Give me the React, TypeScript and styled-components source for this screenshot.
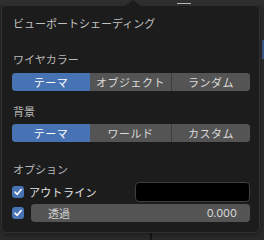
import React, { useState } from "react";
import styled, { createGlobalStyle } from "styled-components";

const GlobalStyle = createGlobalStyle`
  html, body {
    margin: 0;
    padding: 0;
    background: #2a2a2a;
    font-family: Inter, "Noto Sans CJK JP", "Noto Sans", sans-serif;
  }
  * { box-sizing: border-box; }
`;

const Backdrop = styled.div`
  position: relative;
  width: 264px;
  height: 240px;
  overflow: hidden;
  background: #2b2b2b;
`;

const HeaderStrip = styled.div`
  height: 5px;
  background: #303030;
  display: flex;
`;

const HeaderTab = styled.div`
  margin-left: 177px;
  margin-top: 3px;
  width: 14px;
  height: 1px;
  background: #bfbfbf;
`;

const SideSliver = styled.div`
  position: absolute;
  right: 0;
  top: 40px;
  width: 2px;
  height: 19px;
  background: #3a5a8c;
`;

const Divider = styled.div`
  position: absolute;
  left: 150px;
  bottom: 0;
  width: 2px;
  height: 8px;
  background: #151515;
`;

const Popup = styled.div`
  position: absolute;
  left: 1px;
  top: 5px;
  width: 259px;
  height: 228px;
  background: #1c1c1c;
  border: 1px solid #2f2f2f;
  border-radius: 5px;
  padding: 12px 9px 10px 10px;
  display: flex;
  flex-direction: column;
  box-shadow: 0 2px 6px rgba(0, 0, 0, 0.35);
`;

const Pointer = styled.div`
  position: absolute;
  top: -6px;
  left: 123px;
  width: 0;
  height: 0;
  border-left: 8px solid transparent;
  border-right: 8px solid transparent;
  border-bottom: 6px solid #1c1c1c;
`;

const Title = styled.div`
  height: 12px;
  line-height: 12px;
  font-size: 11px;
  color: #c2c2c2;
  padding-left: 1px;
  white-space: nowrap;
`;

const Label = styled.div<{ $top: number }>`
  margin-top: ${(p) => p.$top}px;
  height: 12px;
  line-height: 12px;
  font-size: 11px;
  color: #b8b8b8;
  padding-left: 1px;
  white-space: nowrap;
`;

const Segmented = styled.div<{ $top: number }>`
  margin-top: ${(p) => p.$top}px;
  display: grid;
  grid-template-columns: 78px 81px 1fr;
  height: 18px;
  border-radius: 4px;
  overflow: hidden;
  background: #545454;
`;

const Segment = styled.button<{ $active: boolean; $sep: boolean }>`
  all: unset;
  display: flex;
  align-items: center;
  justify-content: center;
  font-family: Inter, "Noto Sans CJK JP", sans-serif;
  font-size: 11px;
  letter-spacing: 0.5px;
  color: ${(p) => (p.$active ? "#ffffff" : "#dcdcdc")};
  background: ${(p) => (p.$active ? "#4772b3" : "#545454")};
  border-left: ${(p) => (p.$sep ? "1px solid #3d3d3d" : "none")};
  cursor: pointer;
`;

const Row = styled.div<{ $top: number; $h: number }>`
  margin-top: ${(p) => p.$top}px;
  height: ${(p) => p.$h}px;
  display: flex;
  align-items: center;
`;

const CheckLabel = styled.label<{ $w: number }>`
  width: ${(p) => p.$w}px;
  display: flex;
  align-items: center;
  gap: 5px;
  font-size: 11px;
  color: #e2e2e2;
  letter-spacing: 0.3px;
  cursor: pointer;
  white-space: nowrap;
`;

const Box = styled.span`
  width: 12px;
  height: 12px;
  border-radius: 3px;
  background: #4772b3;
  display: flex;
  align-items: center;
  justify-content: center;
  flex: none;
`;

const ColorField = styled.div`
  flex: 1;
  height: 20px;
  background: #000;
  border: 1px solid #3f3f3f;
  border-radius: 4px;
`;

const Slider = styled.div`
  flex: 1;
  height: 18px;
  background: #545454;
  border-radius: 4px;
  display: flex;
  align-items: center;
  justify-content: space-between;
  padding: 0 13px 0 17px;
  font-size: 11px;
  color: #d4d4d4;
`;

const Check = () => (
  <svg width="10" height="10" viewBox="0 0 10 10">
    <polyline
      points="2,5.2 4.2,7.3 8.2,2.6"
      fill="none"
      stroke="#fff"
      strokeWidth="1.6"
      strokeLinecap="round"
      strokeLinejoin="round"
    />
  </svg>
);

const wireOptions = ["テーマ", "オブジェクト", "ランダム"];
const bgOptions = ["テーマ", "ワールド", "カスタム"];

export default function App() {
  const [wire, setWire] = useState(0);
  const [bg, setBg] = useState(0);

  return (
    <Backdrop>
      <GlobalStyle />
      <HeaderStrip>
        <HeaderTab />
      </HeaderStrip>
      <SideSliver />
      <Divider />
      <Popup>
        <Pointer />
        <Title>ビューポートシェーディング</Title>

        <Label $top={24}>ワイヤカラー</Label>
        <Segmented $top={7}>
          {wireOptions.map((o, i) => (
            <Segment key={o} $active={wire === i} $sep={i === 2} onClick={() => setWire(i)}>
              {o}
            </Segment>
          ))}
        </Segmented>

        <Label $top={15}>背景</Label>
        <Segmented $top={6}>
          {bgOptions.map((o, i) => (
            <Segment key={o} $active={bg === i} $sep={i === 2} onClick={() => setBg(i)}>
              {o}
            </Segment>
          ))}
        </Segmented>

        <Label $top={22}>オプション</Label>
        <Row $top={6} $h={20}>
          <CheckLabel $w={123}>
            <Box>
              <Check />
            </Box>
            アウトライン
          </CheckLabel>
          <ColorField />
        </Row>
        <Row $top={2} $h={18}>
          <CheckLabel $w={19}>
            <Box>
              <Check />
            </Box>
          </CheckLabel>
          <Slider>
            <span>透過</span>
            <span>0.000</span>
          </Slider>
        </Row>
      </Popup>
    </Backdrop>
  );
}
